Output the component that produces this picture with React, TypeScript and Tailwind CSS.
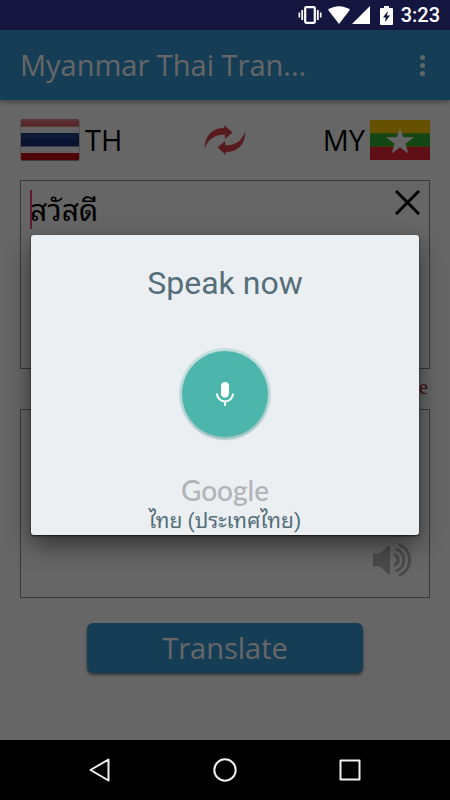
import React from "react";

function VibrateIcon() {
  return (
    <svg viewBox="0 0 24 18" className="h-[18px] w-6" fill="none" stroke="#fff" aria-hidden="true">
      <rect x="7.2" y="1.2" width="9.6" height="15.6" rx="1" strokeWidth="2.2" />
      <path d="M4.2 4v10M19.8 4v10" strokeWidth="1.8" />
      <path d="M1.3 6.5v5M22.7 6.5v5" strokeWidth="1.6" />
    </svg>
  );
}

function WifiIcon() {
  return (
    <svg viewBox="0 0 22 18" className="h-[18px] w-[22px]" fill="#fff" aria-hidden="true">
      <path d="M0 3.8C6 -1 16 -1 22 3.8L11 18z" />
    </svg>
  );
}

function SignalIcon() {
  return (
    <svg viewBox="0 0 18 18" className="h-[18px] w-[18px]" fill="#fff" aria-hidden="true">
      <path d="M18 0v18H0z" />
    </svg>
  );
}

function BatteryIcon() {
  return (
    <svg viewBox="0 0 13 19" className="h-[19px] w-[13px]" aria-hidden="true">
      <path d="M4 0h5v2h3q1 0 1 1v15q0 1-1 1H1q-1 0-1-1V3q0-1 1-1h3z" fill="#fff" />
      <path d="M7.8 5L3 11.5h2.8L4.9 16.2 10 9.5H7z" fill="#14163f" />
    </svg>
  );
}

function ThaiFlag() {
  return (
    <svg viewBox="0 0 60 42" className="h-[42px] w-[60px]" role="img" aria-label="Thailand">
      <defs>
        <linearGradient id="gloss" x1="0" y1="0" x2="0" y2="1">
          <stop offset="0" stopColor="#fff" stopOpacity=".5" />
          <stop offset="1" stopColor="#fff" stopOpacity=".28" />
        </linearGradient>
      </defs>
      <rect x="0.5" y="0.5" width="59" height="41.5" rx="2" fill="#999" />
      <rect x="1" y="0" width="58" height="41" rx="1.5" fill="#c81018" />
      <rect x="1" y="7.5" width="58" height="26.5" fill="#f8f8f8" />
      <rect x="1" y="14" width="58" height="13.5" fill="#12307c" />
      <rect x="1" y="0" width="58" height="7.5" rx="1.5" fill="url(#gloss)" />
      <rect x="1" y="14" width="58" height="6" fill="#fff" opacity=".08" />
    </svg>
  );
}

function MyanmarFlag() {
  return (
    <svg viewBox="0 0 60 40" className="h-10 w-[60px]" role="img" aria-label="Myanmar">
      <rect width="60" height="40" fill="#fecb00" />
      <rect y="13.3" width="60" height="13.4" fill="#34b233" />
      <rect y="26.7" width="60" height="13.3" fill="#ea2839" />
      <path
        d="M30 8l3.2 9.3h10.6l-8.4 6.4 3 9.8L30 27.6l-8.4 5.9 3-9.8-8.4-6.4h10.6z"
        fill="#fff"
      />
    </svg>
  );
}

function SwapIcon() {
  return (
    <svg viewBox="0 0 42 30" className="h-[30px] w-[42px]" fill="#d9434a" aria-hidden="true">
      <path d="M.5 24C1 10 8 3 20.500 3L20 0l8.500 7.500-7.500 6.500-.3-4.500C12 9.500 4.500 13 .5 24z" />
      <path d="M41.500 6C41 20 34 27 21.500 27L22 30l-8.500-7.500 7.500-6.500.3 4.500c8.700 0 16.200-3.500 20.200-14.500z" />
    </svg>
  );
}

function SpeakerIcon() {
  return (
    <svg viewBox="0 0 40 34" className="h-[34px] w-10" fill="none" aria-hidden="true">
      <path d="M0 10.500h7L15 3q2-1 2 1v26q0 2-2 1L7 23.500H0z" fill="#b8b8b8" />
      <g stroke="#b8b8b8" strokeWidth="3" strokeLinecap="round">
        <path d="M22 12a5.500 5.500 0 0 1 0 10" />
        <path d="M24 6.500a11.500 11.500 0 0 1 0 21" />
        <path d="M27 2a16.500 16.500 0 0 1 0 30" />
      </g>
    </svg>
  );
}

function StatusBar() {
  return (
    <div className="flex h-[30px] items-center justify-end bg-[#14163f] pr-[10px]">
      <VibrateIcon />
      <span className="ml-[6px] flex">
        <WifiIcon />
      </span>
      <span className="ml-[2px] flex">
        <SignalIcon />
      </span>
      <span className="ml-[10px] flex">
        <BatteryIcon />
      </span>
      <span className="ml-2 font-[Roboto,sans-serif] text-[20px] leading-[30px] font-medium text-white">3:23</span>
    </div>
  );
}

function NavBar() {
  return (
    <nav className="flex h-[60px] items-center justify-center gap-[101px] bg-black">
      <button aria-label="Back" className="flex h-6 w-6 items-center justify-center">
        <svg viewBox="0 0 24 24" className="h-6 w-6" fill="none" stroke="#f0f0f0" strokeWidth="2" strokeLinejoin="round">
          <path d="M20.500 1.500v21L2.500 12z" />
        </svg>
      </button>
      <button aria-label="Home" className="flex h-6 w-6 items-center justify-center">
        <svg viewBox="0 0 24 24" className="h-6 w-6" fill="none" stroke="#f0f0f0" strokeWidth="2">
          <circle cx="12" cy="12" r="10.700" />
        </svg>
      </button>
      <button aria-label="Recent apps" className="flex h-6 w-6 items-center justify-center">
        <svg viewBox="0 0 24 24" className="h-6 w-6" fill="none" stroke="#f0f0f0" strokeWidth="2" strokeLinejoin="round">
          <rect x="2.500" y="2.500" width="19" height="19" />
        </svg>
      </button>
    </nav>
  );
}

function SpeechDialog() {
  return (
    <div className="absolute inset-0 flex items-center bg-black/60 px-[31px]">
      <section
        role="dialog"
        aria-label="Speak now"
        className="flex w-full flex-col items-center rounded-[3px] bg-[#ebeff2] pt-7 font-[Roboto,'Noto_Sans_Thai_Looped',Loma,'Noto_Sans_Thai',sans-serif] shadow-[0_10px_24px_rgba(0,0,0,0.5),0_1px_2px_rgba(0,0,0,0.7)]"
      >
        <h2 className="text-[32px] leading-10 text-[#546e7a]">Speak now</h2>
        <button
          aria-label="Stop listening"
          className="mt-[45px] flex h-[92px] w-[92px] items-center justify-center rounded-full bg-[#c5dfdf]"
        >
          <span className="flex h-[86px] w-[86px] items-center justify-center rounded-full bg-[#4db6ac] shadow-[0_2px_3px_rgba(0,80,80,0.25)]">
            <svg viewBox="0 0 18 24" className="h-6 w-[18px]" fill="none" aria-hidden="true">
              <rect x="5" y="0" width="8" height="15.500" rx="4" fill="#fff" />
              <path d="M1 11.500a8 8 0 0 0 16 0M9 19.500V24" stroke="#fff" strokeWidth="2" />
            </svg>
          </span>
        </button>
        <span className="mt-8 font-[Lato,sans-serif] text-[28px] leading-9 font-medium text-[#b0b4b7]">Google</span>
        <p className="text-[21px] leading-[27px] text-[#546e7a]">ไทย (ประเทศไทย)</p>
      </section>
    </div>
  );
}

export default function App() {
  return (
    <div className="flex min-h-screen flex-col bg-white font-['Noto_Sans','Noto_Sans_Thai_Looped',Loma,'Noto_Sans_Thai',sans-serif]">
      <StatusBar />
      <div className="relative flex flex-1 flex-col">
        <header className="flex h-[70px] items-center justify-between bg-[#3798d7] pr-[25px] pl-5 shadow-[0_2px_5px_rgba(0,0,0,0.35)]">
          <h1 className="font-['Open_Sans',sans-serif] text-[29px] leading-10 text-white">Myanmar Thai Tran...</h1>
          <button aria-label="More options" className="flex flex-col gap-[3px]">
            <span className="h-[5px] w-[5px] rounded-full bg-white" />
            <span className="h-[5px] w-[5px] rounded-full bg-white" />
            <span className="h-[5px] w-[5px] rounded-full bg-white" />
          </button>
        </header>
        <main className="flex flex-1 flex-col px-5 pt-5">
          <div className="grid grid-cols-[1fr_auto_1fr] grid-rows-[40px] items-center">
            <button className="flex items-center gap-[5px] justify-self-start font-['Open_Sans',sans-serif] text-[29px] leading-10 text-black">
              <ThaiFlag />
              TH
            </button>
            <button aria-label="Swap languages">
              <SwapIcon />
            </button>
            <button className="flex items-center gap-[5px] justify-self-end font-['Open_Sans',sans-serif] text-[29px] leading-10 text-black">
              MY
              <MyanmarFlag />
            </button>
          </div>
          <div className="relative mt-5 flex h-[189px] border border-[#8c8c8c]">
            <textarea
              aria-label="Text to translate"
              defaultValue="สวัสดี"
              className="w-full resize-none bg-transparent px-[9px] py-[10px] text-[30px] leading-[38px] text-black outline-none"
            />
            <span className="absolute top-[9px] left-[9px] h-[39px] w-[2px] bg-[#ff4081]" />
            <button aria-label="Clear text" className="absolute top-[9px] right-[9px]">
              <svg viewBox="0 0 25 25" className="h-[25px] w-[25px]" stroke="#000" strokeWidth="3">
                <path d="M1 1l23 23M24 1L1 24" />
              </svg>
            </button>
          </div>
          <p className="h-10 pr-[2px] text-right font-['Liberation_Serif',serif] text-[20px] leading-9 text-[#a02828]">
            Google
          </p>
          <div className="relative flex h-[189px] border border-[#8c8c8c]">
            <textarea
              aria-label="Translation"
              readOnly
              className="w-full resize-none bg-transparent px-[9px] py-[10px] text-[30px] leading-[38px] text-black outline-none"
            />
            <button aria-label="Listen" className="absolute right-4 bottom-5">
              <SpeakerIcon />
            </button>
          </div>
          <div className="flex px-[67px] pt-[25px] pb-[67px]">
            <button className="flex-1 rounded-[6px] bg-[#3798d7] font-['Open_Sans',sans-serif] text-[29px] leading-[50px] text-white shadow-[0_2px_3px_rgba(0,0,0,0.5)]">
              Translate
            </button>
          </div>
        </main>
        <SpeechDialog />
      </div>
      <NavBar />
    </div>
  );
}
